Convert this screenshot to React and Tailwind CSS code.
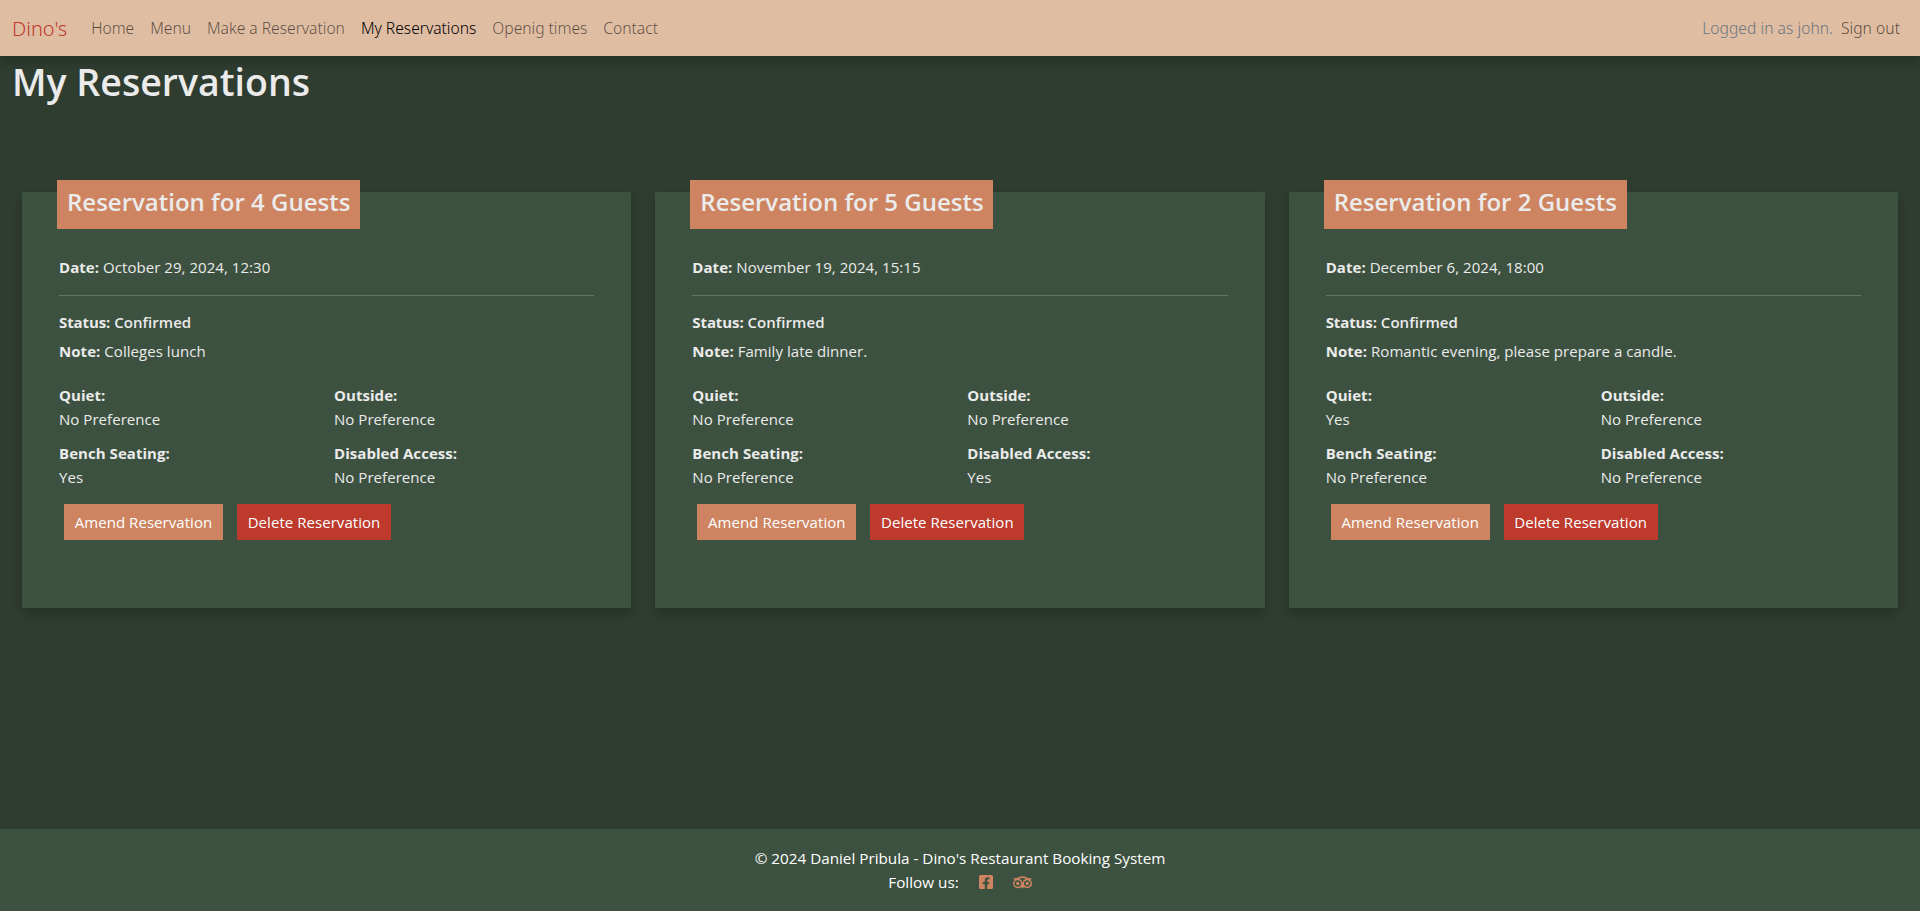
import { FaFacebookSquare, FaTripadvisor } from "react-icons/fa";

const navLinks = [
  { label: "Home" },
  { label: "Menu" },
  { label: "Make a Reservation" },
  { label: "My Reservations", active: true },
  { label: "Openig times" },
  { label: "Contact" },
];

const reservations = [
  {
    guests: 4,
    date: "October 29, 2024, 12:30",
    note: "Colleges lunch",
    quiet: "No Preference",
    outside: "No Preference",
    bench: "Yes",
    access: "No Preference",
  },
  {
    guests: 5,
    date: "November 19, 2024, 15:15",
    note: "Family late dinner.",
    quiet: "No Preference",
    outside: "No Preference",
    bench: "No Preference",
    access: "Yes",
  },
  {
    guests: 2,
    date: "December 6, 2024, 18:00",
    note: "Romantic evening, please prepare a candle.",
    quiet: "Yes",
    outside: "No Preference",
    bench: "No Preference",
    access: "No Preference",
  },
];

function Navbar() {
  return (
    <header className="flex h-14 shrink-0 items-center bg-[#dfbda3] px-3 pt-[1px] font-['Noto_Sans',sans-serif] text-[15.6px] font-light shadow-[0_5px_10px_0_rgba(0,0,0,0.2)]">
      <a className="mr-4 text-[20px] leading-[30px] text-[#bd3a2d]">Dino's</a>
      <nav className="flex">
        {navLinks.map((link) => (
          <a key={link.label} className={link.active ? "px-2 text-black" : "px-2 text-black/60"}>
            {link.label}
          </a>
        ))}
      </nav>
      <div className="ml-auto flex gap-2 pr-2 tracking-[0.05px]">
        <span className="text-[#6c757d]">Logged in as john.</span>
        <a className="text-black/65">Sign out</a>
      </div>
    </header>
  );
}

function Preference({ label, value }) {
  return (
    <div>
      <p className="font-bold">{label}</p>
      <p>{value}</p>
    </div>
  );
}

function ReservationCard({ item }) {
  return (
    <article className="h-[416px] bg-[#3d5140] px-[37px] text-[15px] leading-6 tracking-[0.05px] text-[#ebebeb] shadow-[0_5px_10px_0_rgba(0,0,0,0.2)]">
      <h2 className="-mt-3 -ml-[2px] h-[49px] w-[303px] bg-[#ce8460] px-[10px] pt-[7px] text-[24px] leading-[29px] font-semibold tracking-normal whitespace-nowrap">
        Reservation for {item.guests} Guests
      </h2>
      <p className="mt-[26px]">
        <strong>Date:</strong> {item.date}
      </p>
      <hr className="mt-4 border-[#5f7865]" />
      <p className="mt-[14px]">
        <strong className="tracking-[-0.1px]">Status:</strong> <span className="font-semibold">Confirmed</span>
      </p>
      <p className="mt-[5px]">
        <strong>Note:</strong> {item.note}
      </p>
      <div className="mt-5 grid grid-cols-[275px_1fr] gap-y-[10px]">
        <Preference label="Quiet:" value={item.quiet} />
        <Preference label="Outside:" value={item.outside} />
        <Preference label="Bench Seating:" value={item.bench} />
        <Preference label="Disabled Access:" value={item.access} />
      </div>
      <div className="mt-[15px] ml-[5px] flex gap-[14px] text-white">
        <button className="h-9 w-[159px] bg-[#ce8460]">Amend Reservation</button>
        <button className="h-9 w-[154px] bg-[#bd3a2d]">Delete Reservation</button>
      </div>
    </article>
  );
}

function Footer() {
  return (
    <footer className="flex h-[82px] shrink-0 flex-col items-center bg-[#3d5140] pt-[17px] text-[15.25px] leading-6 text-white shadow-[0_5px_10px_0_rgba(0,0,0,0.2)]">
      <p>© 2024 Daniel Pribula - Dino's Restaurant Booking System</p>
      <div className="flex items-center">
        <span>Follow us:</span>
        <FaFacebookSquare className="ml-5 h-4 w-[14px] text-[#ce8460]" />
        <FaTripadvisor className="ml-5 h-[17px] w-[19px] text-[#ce8460]" />
      </div>
    </footer>
  );
}

export default function App() {
  return (
    <div className="flex h-[911px] flex-col bg-[#2f3c30] font-['Open_Sans',sans-serif]">
      <Navbar />
      <main className="flex-1">
        <h1 className="h-[136px] pt-[2px] pl-3 text-[37.5px] leading-[48px] font-semibold text-[#ebebeb]">
          My Reservations
        </h1>
        <section className="grid grid-cols-3 gap-6 px-[22px]">
          {reservations.map((item) => (
            <ReservationCard key={item.guests} item={item} />
          ))}
        </section>
      </main>
      <Footer />
    </div>
  );
}
